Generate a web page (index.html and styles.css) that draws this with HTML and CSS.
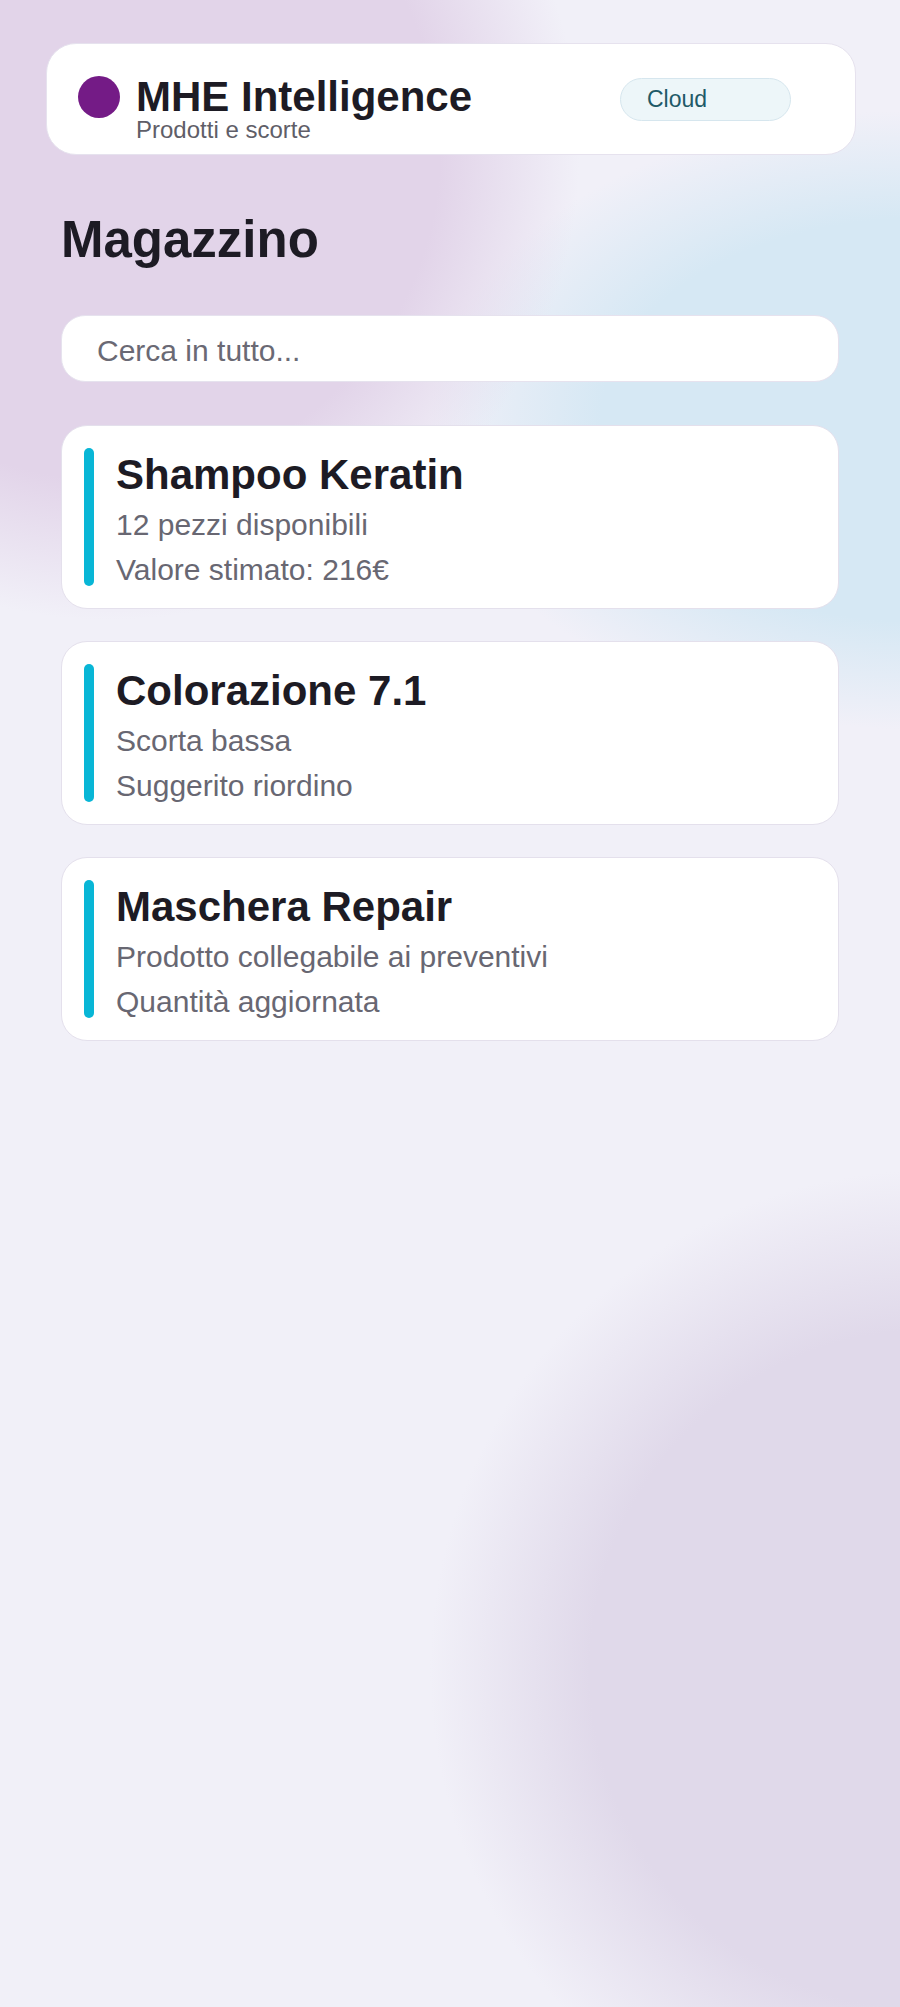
FILE: index.html
```html
<!DOCTYPE html>
<html lang="it">
<head>
  <meta charset="UTF-8" />
  <meta name="viewport" content="width=device-width, initial-scale=1.0" />
  <title>MHE Intelligence - Magazzino</title>
  <link rel="stylesheet" href="styles.css">
</head>
<body>
  <div class="app">
    <header class="topbar">
      <div class="brand">
        <span class="dot"></span>
        <div>
          <h1>MHE Intelligence</h1>
          <p class="sub">Prodotti e scorte</p>
        </div>
      </div>
      <span class="pill">Cloud</span>
    </header>

    <main class="page">
      <h2>Magazzino</h2>

      <input class="search" type="text" placeholder="Cerca in tutto...">

      <div class="list">
        <div class="card">
          <span class="bar"></span>
          <div class="info">
            <h3>Shampoo Keratin</h3>
            <p>12 pezzi disponibili</p>
            <p>Valore stimato: 216€</p>
          </div>
        </div>

        <div class="card">
          <span class="bar"></span>
          <div class="info">
            <h3>Colorazione 7.1</h3>
            <p>Scorta bassa</p>
            <p>Suggerito riordino</p>
          </div>
        </div>

        <div class="card">
          <span class="bar"></span>
          <div class="info">
            <h3>Maschera Repair</h3>
            <p>Prodotto collegabile ai preventivi</p>
            <p>Quantità aggiornata</p>
          </div>
        </div>
      </div>
    </main>
  </div>
</body>
</html>
```

FILE: styles.css
```css
html, body {
  margin: 0;
  min-height: 100%;
}
body {
  min-height: 2007px;
  font-family: "Liberation Sans", Arial, sans-serif;
  color: #1d1b24;
  background:
    radial-gradient(circle at 110px 150px, #e2d4e9 0, #e2d4e9 330px, rgba(226, 212, 233, 0) 470px),
    radial-gradient(ellipse 490px 310px at 920px 420px, #d6e8f4 0, #d6e8f4 65%, rgba(214, 232, 244, 0) 100%),
    radial-gradient(circle at 930px 1670px, #e0d9ea 0, #e0d9ea 340px, rgba(224, 217, 234, 0) 500px),
    #f1f0f8;
}
.app {
  padding: 43px 44px 0 46px;
}

/* top bar */
.topbar {
  display: flex;
  align-items: flex-start;
  justify-content: space-between;
  background: #fff;
  border: 1px solid #e6e2ee;
  border-radius: 30px;
  padding: 32px 31px 12px;
}
.brand {
  display: flex;
  align-items: flex-start;
  gap: 16px;
}
.dot {
  width: 42px;
  height: 42px;
  border-radius: 50%;
  background: #741b86;
}
.brand h1 {
  margin: 0;
  font-size: 42px;
  line-height: 42px;
  font-weight: bold;
}
.sub {
  margin: 0;
  font-size: 24px;
  line-height: 24px;
  color: #5f5e68;
}
.pill {
  width: 143px;
  height: 41px;
  line-height: 41px;
  padding-left: 26px;
  margin: 2px 33px 0 0;
  border: 1px solid #d6e6ee;
  border-radius: 22px;
  background: #edf6f9;
  color: #1f5a68;
  font-size: 23px;
}

/* page */
.page {
  padding: 0 17px 0 15px;
}
.page h2 {
  margin: 54px 0 44px;
  font-size: 51px;
  line-height: 62px;
  font-weight: bold;
}
.search {
  display: block;
  box-sizing: border-box;
  width: 100%;
  height: 67px;
  padding: 4px 35px 0;
  border: 1px solid #e6e2ee;
  border-radius: 24px;
  background: #fff;
  font-family: "Liberation Sans", Arial, sans-serif;
  font-size: 30px;
  color: #1d1b24;
  outline: none;
}
.search::placeholder {
  color: #6a6974;
}

.list {
  display: flex;
  flex-direction: column;
  gap: 32px;
  margin-top: 43px;
}
.card {
  display: flex;
  gap: 22px;
  background: #fff;
  border: 1px solid #e4e0ec;
  border-radius: 26px;
  padding: 22px 22px 16px;
}
.bar {
  flex: none;
  width: 10px;
  margin-bottom: 6px;
  border-radius: 5px;
  background: #08b6d6;
}
.info h3 {
  margin: 0;
  font-size: 42px;
  line-height: 54px;
  font-weight: bold;
}
.info p {
  margin: 0;
  font-size: 30px;
  line-height: 45px;
  color: #686772;
}
```
